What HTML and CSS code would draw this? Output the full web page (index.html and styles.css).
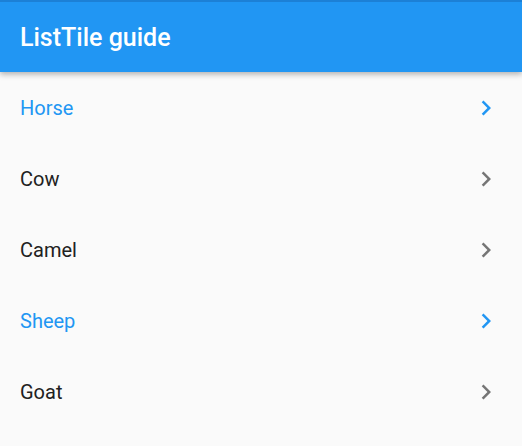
FILE: index.html
```html
<!DOCTYPE html>
<html>
<head>
<meta charset="utf-8">
<link rel="stylesheet" href="styles.css">
</head>
<body>
<div class="app">
  <header class="appbar"><h1 class="title">ListTile guide</h1></header>
  <ul class="list">
    <li class="tile selected"><span class="label">Horse</span><svg class="chev" viewBox="0 0 24 24"><path d="M10 6L8.59 7.41 13.17 12l-4.58 4.59L10 18l6-6z"/></svg></li>
    <li class="tile"><span class="label">Cow</span><svg class="chev" viewBox="0 0 24 24"><path d="M10 6L8.59 7.41 13.17 12l-4.58 4.59L10 18l6-6z"/></svg></li>
    <li class="tile"><span class="label">Camel</span><svg class="chev" viewBox="0 0 24 24"><path d="M10 6L8.59 7.41 13.17 12l-4.58 4.59L10 18l6-6z"/></svg></li>
    <li class="tile selected"><span class="label">Sheep</span><svg class="chev" viewBox="0 0 24 24"><path d="M10 6L8.59 7.41 13.17 12l-4.58 4.59L10 18l6-6z"/></svg></li>
    <li class="tile"><span class="label">Goat</span><svg class="chev" viewBox="0 0 24 24"><path d="M10 6L8.59 7.41 13.17 12l-4.58 4.59L10 18l6-6z"/></svg></li>
  </ul>
</div>
</body>
</html>
```
FILE: styles.css
```css
html, body {
  margin: 0;
  padding: 0;
  background: #fafafa;
  font-family: Roboto, "Noto Sans", sans-serif;
}
.app {
  width: 522px;
  height: 446px;
  overflow: hidden;
  background: #fafafa;
}
.appbar {
  position: relative;
  z-index: 1;
  height: 70px;
  border-top: 2px solid #1c80d6;
  background: #2196f3;
  box-shadow: 0 2px 5px rgba(0,0,0,0.22), 0 4px 6px rgba(0,0,0,0.08);
  display: flex;
  align-items: center;
  padding: 0 20px;
}
.title {
  margin: 0;
  color: #fff;
  font-size: 25px;
  font-weight: 500;
  line-height: 1;
  padding-top: 1px;
}
.list {
  list-style: none;
  margin: 0;
  padding: 0;
}
.tile {
  height: 71.1px;
  display: flex;
  align-items: center;
  justify-content: space-between;
  padding: 0 21px 0 20px;
  color: #212121;
  fill: #757575;
}
.tile.selected {
  color: #2196f3;
  fill: #2196f3;
}
.label {
  font-size: 20px;
  line-height: 1;
}
.chev {
  width: 30px;
  height: 30px;
}
```
